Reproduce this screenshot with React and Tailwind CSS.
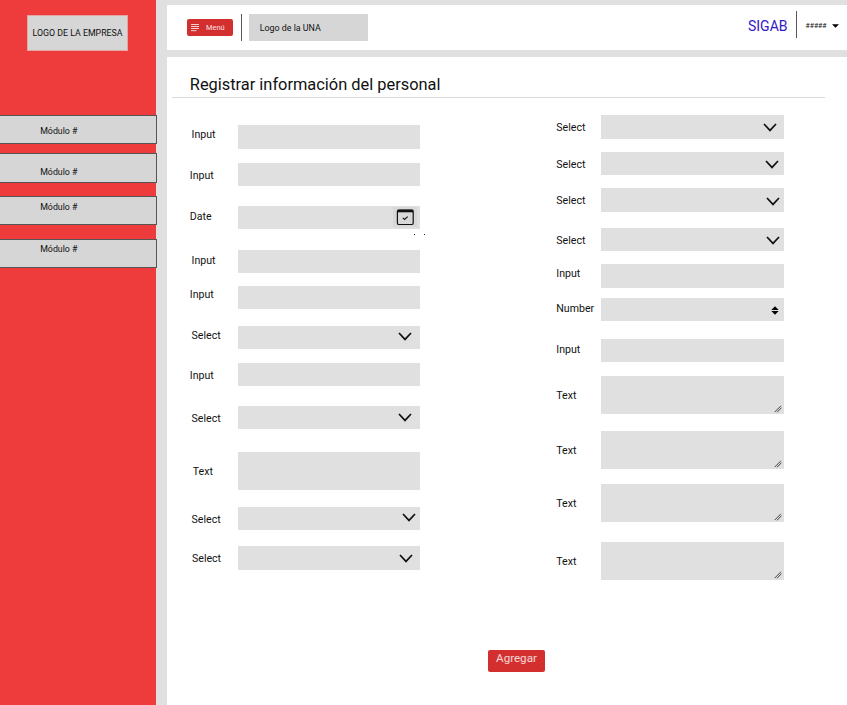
const modules = [
  'h-[29px] mt-[64px] pt-[10px]',
  'h-[30px] mt-[9px] pt-[12.5px]',
  'h-[29px] mt-[13px] pt-[5px]',
  'h-[29px] mt-[13.6px] pt-[4.4px]',
];

const leftFields = [
  { label: 'Input', row: 'mt-[27.9px] h-[23.4px]', text: 'pl-[1.8px] pt-[3.3px]' },
  { label: 'Input', row: 'mt-[14px] h-[23.4px]', text: 'pt-[7.4px]' },
  { label: 'Date', row: 'mt-[19.8px] h-[23.4px]', text: 'pt-[5px]', icon: 'date', spot: 'pr-[3px] pt-[1.2px]' },
  { label: 'Input', row: 'mt-[20.2px] h-[23.4px]', text: 'pl-[1.8px] pt-[5.1px]' },
  { label: 'Input', row: 'mt-[12.7px] h-[23.4px]', text: 'pt-[3px]' },
  { label: 'Select', row: 'mt-[16.4px] h-[23.4px]', text: 'pl-[1.8px] pt-[4.2px]', icon: 'select', spot: 'pr-[8.2px] pt-[6.9px]' },
  { label: 'Input', row: 'mt-[13.9px] h-[23.4px]', text: 'pt-[6.9px]' },
  { label: 'Select', row: 'mt-[19.7px] h-[23.4px]', text: 'pl-[1.8px] pt-[7px]', icon: 'select', spot: 'pr-[8.2px] pt-[7.6px]' },
  { label: 'Text', row: 'mt-[22.7px] h-[37.6px]', text: 'pl-[3px] pt-[13.9px]' },
  { label: 'Select', row: 'mt-[17px] h-[23.4px]', text: 'pl-[1.8px] pt-[7.4px]', icon: 'select', spot: 'pr-[4.3px] pt-[6.4px]' },
  { label: 'Select', row: 'mt-[16.2px] h-[23.4px]', text: 'pl-[2.2px] pt-[7px]', icon: 'select', spot: 'pr-[7.3px] pt-[7.4px]' },
];

const rightFields = [
  { label: 'Select', row: 'mt-[17.6px] h-[23.4px]', text: 'pt-[6.7px]', icon: 'select', spot: 'pr-[6.8px] pt-[7.4px]' },
  { label: 'Select', row: 'mt-[13.3px] h-[23.4px]', text: 'pt-[6.7px]', icon: 'select', spot: 'pr-[5.2px] pt-[7.8px]' },
  { label: 'Select', row: 'mt-[13px] h-[23.4px]', text: 'pt-[6.7px]', icon: 'select', spot: 'pr-[4px] pt-[8.6px]' },
  { label: 'Select', row: 'mt-[16px] h-[23.4px]', text: 'pt-[7.2px]', icon: 'select', spot: 'pr-[4px] pt-[8.7px]' },
  { label: 'Input', row: 'mt-[13.3px] h-[23.4px]', text: 'pt-[4px]' },
  { label: 'Number', row: 'mt-[9.8px] h-[23.4px]', text: 'pt-[5.5px]', icon: 'number', spot: 'pr-[5.3px] pt-[8.4px]' },
  { label: 'Input', row: 'mt-[18px] h-[23.4px]', text: 'pt-[5.5px]' },
  { label: 'Text', row: 'mt-[13.9px] h-[37.6px]', text: 'pt-[14.2px]', icon: 'resize', spot: 'pr-[2px] pt-[28.8px]' },
  { label: 'Text', row: 'mt-[17.4px] h-[37.6px]', text: 'pt-[14.2px]', icon: 'resize', spot: 'pr-[2px] pt-[28.8px]' },
  { label: 'Text', row: 'mt-[15.3px] h-[37.6px]', text: 'pt-[14.2px]', icon: 'resize', spot: 'pr-[2px] pt-[28.8px]' },
  { label: 'Text', row: 'mt-[20.6px] h-[37.6px]', text: 'pt-[14.2px]', icon: 'resize', spot: 'pr-[2px] pt-[28.8px]' },
];

function FieldIcon({ name }) {
  if (name === 'select') {
    return (
      <svg width="14" height="9" viewBox="0 0 14 9" fill="none" stroke="#111" strokeWidth="1.7">
        <path d="M1 1l6 6.4L13 1" />
      </svg>
    );
  }
  if (name === 'date') {
    return (
      <span className="flex h-[20px] w-[24px] items-center justify-center bg-[#d8d8d8]">
        <svg width="18" height="18" viewBox="0 0 18 18" fill="none" stroke="#111">
          <rect x="1.4" y="2.2" width="15.8" height="14.3" rx="1.6" strokeWidth="1.2" />
          <path d="M1.4 3h15.8" strokeWidth="2.6" />
          <path d="M6.8 9.9l1.8 1.6 3.1-2.9" strokeWidth="1.1" />
        </svg>
      </span>
    );
  }
  if (name === 'number') {
    return (
      <svg width="8" height="9" viewBox="0 0 8 9" fill="#000">
        <path d="M.3 3.9L4 .3l3.7 3.6zM.3 5.1h7.4L4 8.7z" />
      </svg>
    );
  }
  return (
    <svg width="8" height="8" viewBox="0 0 8 8" fill="none" stroke="#444" strokeWidth="1">
      <path d="M.7 7.1l6.2-6.3M3.1 7.3l4.3-4.6" />
    </svg>
  );
}

function Field({ field, box }) {
  return (
    <div className={`flex items-start ${field.row}`}>
      <div className={`w-full min-w-0 flex-1 whitespace-nowrap text-[10.6px] leading-[12px] ${field.text}`}>{field.label}</div>
      <div className={`flex h-full shrink-0 items-start justify-end bg-[#e0e0e0] ${box} ${field.spot || ''}`}>
        {field.icon && <FieldIcon name={field.icon} />}
      </div>
    </div>
  );
}

export default function App() {
  return (
    <div className="flex h-[705px] w-[847px] overflow-hidden bg-[#e0e0e0] font-['Roboto',sans-serif] text-[#111]">
      <aside className="w-[156.4px] shrink-0 bg-[#ee3b3b]">
        <div className="ml-[27px] mt-[15px] flex h-[36px] w-[101px] items-center justify-center whitespace-nowrap border border-[#e5a5a5] bg-[#d6d6d6] pt-[2px] text-[8.8px]">
          LOGO DE LA EMPRESA
        </div>
        <nav>
          {modules.map((box, i) => (
            <div key={i} className={`w-[156.6px] border-y border-r border-[#555] bg-[#d6d6d6] pl-[40.2px] text-[8.8px] leading-[11px] ${box}`}>
              Módulo #
            </div>
          ))}
        </nav>
      </aside>

      <div className="ml-[11px] flex flex-1 flex-col">
        <header className="mt-[5px] flex h-[45.3px] items-start bg-white">
          <button className="ml-[19.4px] mt-[14px] flex h-[17px] w-[46px] items-center rounded-[2px] bg-[#d32f2f] pl-[4.4px] text-[7.4px] text-white/85">
            <svg width="8" height="8" viewBox="0 0 8 8" stroke="#f4d0d0" strokeWidth="1">
              <path d="M0 .5h8M0 2.5h8M0 4.5h8M0 6.7h5.5" />
            </svg>
            <span className="ml-[6.9px] pt-[1px]">Menú</span>
          </button>
          <div className="ml-[7.8px] mt-[9px] h-[27px] w-px bg-[#5c5457]" />
          <div className="ml-[7.6px] mt-[9px] flex h-[27px] w-[118.6px] items-center bg-[#d6d6d6] pl-[10.5px] pt-[2.5px] text-[8.9px]">
            Logo de la UNA
          </div>
          <div className="ml-auto mt-[12.8px] text-[14px] leading-[17px] text-[#3217c4]">SIGAB</div>
          <div className="ml-[8.3px] mt-[5.6px] h-[27px] w-px bg-[#5c5457]" />
          <div className="ml-[8.6px] mt-[16px] text-[6.9px] leading-[10px]">#####</div>
          <svg className="ml-[5.4px] mr-[8px] mt-[19.3px]" width="7" height="4" viewBox="0 0 7 4" fill="#000">
            <path d="M0 .2h7L3.5 3.8z" />
          </svg>
        </header>

        <main className="mt-[6.3px] flex flex-1 flex-col bg-white">
          <h1 className="ml-[4.6px] flex h-[41px] w-[653px] items-start border-b border-[#dadada] pl-[17.8px] pt-[18.4px] text-[16.4px] leading-[20px]">
            Registrar información del personal
          </h1>
          <div className="flex h-[552px] items-start">
            <section className="relative ml-[22.4px] w-[230.5px]">
              {leftFields.map((field, i) => (
                <Field key={i} field={field} box="w-[182.4px]" />
              ))}
              <span className="absolute left-[224px] top-[136px] h-px w-[1.5px] bg-[#222]" />
              <span className="absolute left-[234px] top-[136px] h-px w-[1.5px] bg-[#222]" />
            </section>
            <section className="ml-[136px] w-[227.7px]">
              {rightFields.map((field, i) => (
                <Field key={i} field={field} box="w-[183px]" />
              ))}
            </section>
          </div>
          <button className="ml-[320.6px] mt-[0.5px] flex h-[22px] w-[57px] items-start justify-center rounded-[2px] bg-[#d32f2f] pt-[2px] text-[11.6px] leading-[13px] text-white/80">
            Agregar
          </button>
        </main>
      </div>
    </div>
  );
}
